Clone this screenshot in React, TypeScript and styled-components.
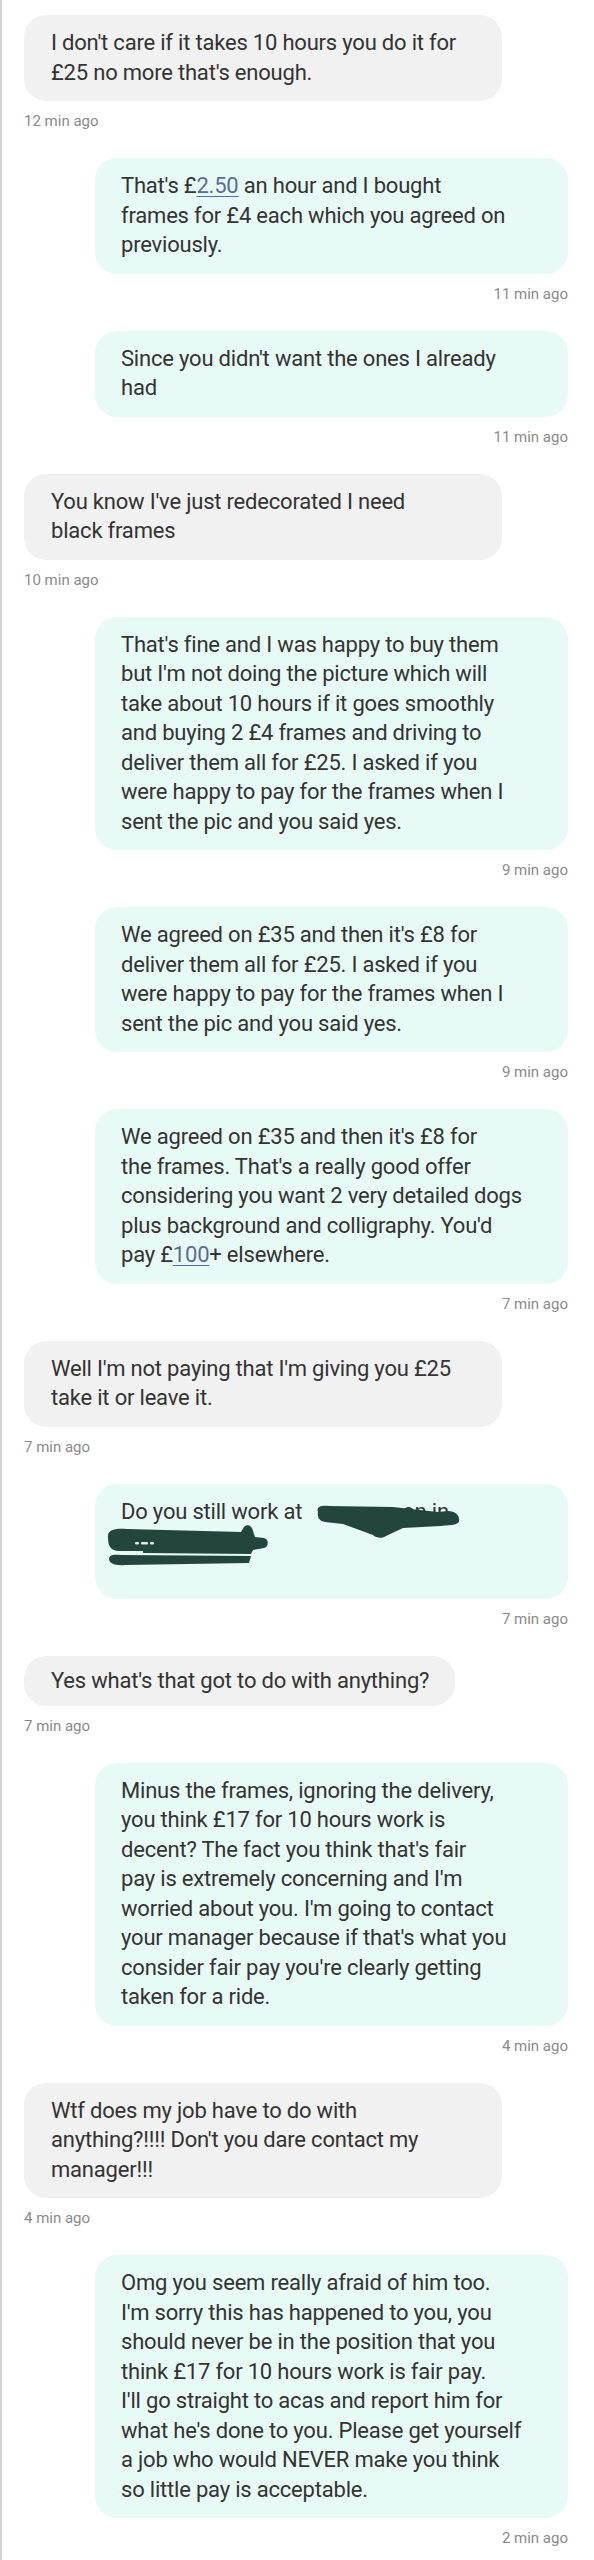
import React from "react";
import styled, { createGlobalStyle } from "styled-components";

type Side = "them" | "me";

interface Message {
  from: Side;
  lines: React.ReactNode[];
  time: string;
  redacted?: boolean;
}

const GlobalStyle = createGlobalStyle`
  html, body {
    margin: 0;
    padding: 0;
    background: #ffffff;
  }
  body {
    font-family: Roboto, "Noto Sans", "Liberation Sans", sans-serif;
    -webkit-font-smoothing: antialiased;
  }
`;

const Frame = styled.div`
  min-height: 2560px;
  box-sizing: border-box;
  border-left: 2px solid #d3d3d3;
  background: #ffffff;
`;

const Thread = styled.div`
  display: flex;
  flex-direction: column;
  gap: 27px;
  padding: 15px 26px 0 22px;
`;

const Entry = styled.div<{ $side: Side }>`
  display: flex;
  flex-direction: column;
  align-items: ${({ $side }) => ($side === "me" ? "flex-end" : "flex-start")};
  gap: 10px;
`;

const Bubble = styled.div<{ $side: Side; $fit: boolean }>`
  position: relative;
  box-sizing: border-box;
  width: ${({ $side, $fit }) => ($fit ? "auto" : $side === "me" ? "473px" : "478px")};
  padding: ${({ $fit }) => ($fit ? "10px 26px 10px" : "13px 26px 14px")};
  padding-left: ${({ $side }) => ($side === "me" ? "26px" : "27px")};
  border-radius: 22px;
  background: ${({ $side }) => ($side === "me" ? "#e8faf6" : "#f1f1f1")};
  color: #333333;
  font-size: 22px;
  font-stretch: 88%;
  line-height: 29.5px;
  letter-spacing: -0.2px;
`;

const Line = styled.div`
  white-space: nowrap;
`;

const Link = styled.span`
  color: #5a6c98;
  text-decoration: underline;
  text-decoration-thickness: 1px;
  text-underline-offset: 3px;
`;

const Tail = styled.span`
  margin-left: 100px;
`;

const Stamp = styled.div`
  font-size: 15px;
  font-stretch: 88%;
  line-height: 20px;
  color: #8a8a8a;
`;

const ScribbleSvg = styled.svg`
  position: absolute;
  left: 8px;
  top: 18px;
`;

// scribbled-out place name over the "Do you still work at" bubble
const Scribble = () => (
  <ScribbleSvg width="360" height="66" viewBox="0 0 360 66" fill="#22463d">
    <path d="M215 10 C213 5 218 3 226 4 L290 5 L335 10 L345 9 C352 9 356 13 356 17 L356 20 C352 24 345 23 338 24 L300 26 L283 34 C279 37 273 36 270 33 L240 22 L222 20 C216 19 214 15 215 10 Z" />
    <path d="M5 36 C4 28 11 26 24 27 L138 30 L141 25 C144 22 149 23 150 29 L152 35 L161 36 C166 37 166 45 161 46 L150 48 L148 52 L40 51 L40 49 L16 49 C8 49 5 44 5 36 Z" />
    <path d="M6 57 C6 53 10 52 18 53 L148 54 L146 61 L22 63 C12 64 6 61 6 57 Z" />
    <rect x="32" y="40" width="4" height="2.5" rx="1" fill="#dfe9e6" />
    <rect x="38" y="40" width="7" height="2.5" rx="1" fill="#dfe9e6" />
    <rect x="47" y="40" width="4" height="2.5" rx="1" fill="#dfe9e6" />
  </ScribbleSvg>
);

const messages: Message[] = [
  {
    from: "them",
    lines: ["I don't care if it takes 10 hours you do it for", "£25 no more that's enough."],
    time: "12 min ago",
  },
  {
    from: "me",
    lines: [
      <>That's £<Link>2.50</Link> an hour and I bought</>,
      "frames for £4 each which you agreed on",
      "previously.",
    ],
    time: "11 min ago",
  },
  {
    from: "me",
    lines: ["Since you didn't want the ones I already", "had"],
    time: "11 min ago",
  },
  {
    from: "them",
    lines: ["You know I've just redecorated I need", "black frames"],
    time: "10 min ago",
  },
  {
    from: "me",
    lines: [
      "That's fine and I was happy to buy them",
      "but I'm not doing the picture which will",
      "take about 10 hours if it goes smoothly",
      "and buying 2 £4 frames and driving to",
      "deliver them all for £25. I asked if you",
      "were happy to pay for the frames when I",
      "sent the pic and you said yes.",
    ],
    time: "9 min ago",
  },
  {
    from: "me",
    lines: [
      "We agreed on £35 and then it's £8 for",
      "deliver them all for £25. I asked if you",
      "were happy to pay for the frames when I",
      "sent the pic and you said yes.",
    ],
    time: "9 min ago",
  },
  {
    from: "me",
    lines: [
      "We agreed on £35 and then it's £8 for",
      "the frames. That's a really good offer",
      "considering you want 2 very detailed dogs",
      "plus background and colligraphy. You'd",
      <>pay £<Link>100</Link>+ elsewhere.</>,
    ],
    time: "7 min ago",
  },
  {
    from: "them",
    lines: ["Well I'm not paying that I'm giving you £25", "take it or leave it."],
    time: "7 min ago",
  },
  {
    from: "me",
    lines: [<>Do you still work at<Tail>on in</Tail></>, "\u00a0", "\u00a0"],
    time: "7 min ago",
    redacted: true,
  },
  {
    from: "them",
    lines: ["Yes what's that got to do with anything?"],
    time: "7 min ago",
  },
  {
    from: "me",
    lines: [
      "Minus the frames, ignoring the delivery,",
      "you think £17 for 10 hours work is",
      "decent? The fact you think that's fair",
      "pay is extremely concerning and I'm",
      "worried about you. I'm going to contact",
      "your manager because if that's what you",
      "consider fair pay you're clearly getting",
      "taken for a ride.",
    ],
    time: "4 min ago",
  },
  {
    from: "them",
    lines: ["Wtf does my job have to do with", "anything?!!!! Don't you dare contact my", "manager!!!"],
    time: "4 min ago",
  },
  {
    from: "me",
    lines: [
      "Omg you seem really afraid of him too.",
      "I'm sorry this has happened to you, you",
      "should never be in the position that you",
      "think £17 for 10 hours work is fair pay.",
      "I'll go straight to acas and report him for",
      "what he's done to you. Please get yourself",
      "a job who would NEVER make you think",
      "so little pay is acceptable.",
    ],
    time: "2 min ago",
  },
];

export default function App() {
  return (
    <>
      <GlobalStyle />
      <Frame>
        <Thread>
          {messages.map((m, i) => (
            <Entry key={i} $side={m.from}>
              <Bubble $side={m.from} $fit={m.lines.length === 1}>
                {m.lines.map((line, j) => (
                  <Line key={j}>{line}</Line>
                ))}
                {m.redacted && <Scribble />}
              </Bubble>
              <Stamp>{m.time}</Stamp>
            </Entry>
          ))}
        </Thread>
      </Frame>
    </>
  );
}
